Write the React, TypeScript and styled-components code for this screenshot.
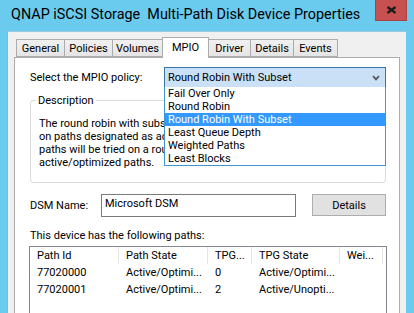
import React from 'react';
import styled, { createGlobalStyle } from 'styled-components';

const GlobalStyle = createGlobalStyle`
  html, body {
    margin: 0;
    padding: 0;
  }
  body {
    width: 414px;
    height: 313px;
    overflow: hidden;
    font-family: Roboto, "Liberation Sans", Arial, sans-serif;
    font-size: 11px;
    color: #000;
  }
`;

const Window = styled.div`
  width: 414px;
  height: 313px;
  display: flex;
  flex-direction: column;
  background: #6bcbef;
  overflow: hidden;
`;

const TitleBar = styled.div`
  height: 31px;
  display: flex;
  align-items: flex-start;
  justify-content: space-between;
  flex-shrink: 0;
`;

const Title = styled.div`
  margin: 6px 0 0 11px;
  font-size: 14.4px;
  line-height: 18px;
  color: #000;
  white-space: pre;
`;

const CloseButton = styled.div`
  width: 32px;
  height: 21px;
  margin-right: 7px;
  background: #c75050;
  border: 1px solid #a94444;
  border-top: none;
  display: flex;
  align-items: center;
  justify-content: center;
  box-sizing: border-box;
`;

const Client = styled.div`
  flex: 1;
  margin: 0 8px 0 7px;
  background: #f0f0f0;
  border-left: 1px solid #8fb3c6;
  border-top: 1px solid #9cc7dc;
  padding: 6px 0 0 6px;
  display: flex;
  flex-direction: column;
  min-height: 0;
`;

const TabStrip = styled.div`
  height: 20px;
  display: flex;
  align-items: flex-end;
  padding-left: 2px;
  margin-bottom: -1px;
  position: relative;
  z-index: 1;
`;

const Tab = styled.div<{ $w: number; $active?: boolean }>`
  width: ${({ $w }) => $w}px;
  box-sizing: border-box;
  height: ${({ $active }) => ($active ? 21 : 18)}px;
  margin-bottom: ${({ $active }) => ($active ? 0 : 1)}px;
  border: 1px solid #acacac;
  border-bottom: ${({ $active }) => ($active ? 'none' : '1px solid #acacac')};
  background: ${({ $active }) => ($active ? '#fff' : 'linear-gradient(#f0f0f0, #e5e5e5)')};
  display: flex;
  justify-content: center;
  align-items: ${({ $active }) => ($active ? 'flex-start' : 'center')};
  padding-top: ${({ $active }) => ($active ? 3 : 0)}px;
  & + & {
    margin-left: -1px;
  }
`;

const Panel = styled.div`
  width: 386px;
  flex: 1;
  box-sizing: border-box;
  background: #fff;
  border: 1px solid #acacac;
  border-bottom: none;
  padding: 9px 13px 0 15px;
  display: flex;
  flex-direction: column;
  overflow: hidden;
`;

const Row = styled.div<{ $h: number; $gap?: number }>`
  display: flex;
  align-items: center;
  height: ${({ $h }) => $h}px;
  margin-top: ${({ $gap }) => $gap ?? 0}px;
  flex-shrink: 0;
`;

const Label = styled.div<{ $w?: number }>`
  width: ${({ $w }) => ($w ? `${$w}px` : 'auto')};
  flex-shrink: 0;
  line-height: 13px;
`;

const Combo = styled.div`
  flex: 1;
  height: 21px;
  box-sizing: border-box;
  position: relative;
  background: #c9e0f7;
  border: 1px solid #3a74a5;
  display: flex;
  align-items: center;
  justify-content: space-between;
  padding: 0 5px 0 3px;
`;

const DropList = styled.div`
  position: absolute;
  top: 100%;
  left: -1px;
  right: -1px;
  background: #fff;
  border: 1px solid #3c97d3;
  border-top: none;
  z-index: 5;
`;

const DropItem = styled.div<{ $selected?: boolean }>`
  height: 13px;
  line-height: 13px;
  padding-left: 3px;
  background: ${({ $selected }) => ($selected ? '#3399ff' : 'transparent')};
  color: ${({ $selected }) => ($selected ? '#fff' : '#000')};
  white-space: nowrap;
`;

const GroupBox = styled.fieldset`
  margin: 6px 0 0;
  padding: 10px 8px 13px;
  border: 1px solid #dcdcdc;
  border-radius: 3px;
  flex-shrink: 0;
`;

const Legend = styled.legend`
  padding: 0 2px;
  margin-left: -3px;
  line-height: 13px;
`;

/* the open drop-down list hides the rest of each line */
const Description = styled.div`
  width: 125px;
  overflow: hidden;
  line-height: 13px;
  white-space: nowrap;
`;

const TextInput = styled.div`
  width: 195px;
  height: 23px;
  box-sizing: border-box;
  border: 1px solid #7a7a7a;
  display: flex;
  align-items: center;
  padding-left: 3px;
  padding-bottom: 3px;
`;

const Button = styled.div`
  margin-left: auto;
  width: 74px;
  height: 22px;
  box-sizing: border-box;
  background: #e1e1e1;
  border: 1px solid #adadad;
  display: flex;
  align-items: center;
  justify-content: center;
`;

const ListView = styled.div`
  margin: 4px -1px 0;
  flex: 1;
  border: 1px solid #828790;
  border-bottom: none;
  background: #fff;
`;

const ListRow = styled.div`
  display: grid;
  grid-template-columns: 89px 89px 44px 88px 43px;
  height: 17px;
  align-items: center;
`;

const Cell = styled.div<{ $header?: boolean }>`
  height: 100%;
  box-sizing: border-box;
  padding-left: 7px;
  display: flex;
  align-items: center;
  white-space: nowrap;
  overflow: hidden;
  border-right: ${({ $header }) => ($header ? '1px solid #e5e5e5' : 'none')};
`;

const tabs = [
  { label: 'General', w: 49 },
  { label: 'Policies', w: 49 },
  { label: 'Volumes', w: 51 },
  { label: 'MPIO', w: 47, active: true },
  { label: 'Driver', w: 43 },
  { label: 'Details', w: 44 },
  { label: 'Events', w: 45 },
];

const policies = [
  'Fail Over Only',
  'Round Robin',
  'Round Robin With Subset',
  'Least Queue Depth',
  'Weighted Paths',
  'Least Blocks',
];

const columns = ['Path Id', 'Path State', 'TPG...', 'TPG State', 'Wei...'];

const paths = [
  ['77020000', 'Active/Optimi...', '0', 'Active/Optimi...', ''],
  ['77020001', 'Active/Optimi...', '2', 'Active/Unopti...', ''],
];

const CloseIcon = () => (
  <svg width="11" height="8" viewBox="0 0 11 8">
    <path d="M1.5 1 L9.5 7 M9.5 1 L1.5 7" stroke="#1c1c1c" strokeWidth="2.2" />
  </svg>
);

const Chevron = () => (
  <svg width="8" height="6" viewBox="0 0 8 6">
    <path d="M1 1 L4 4.3 L7 1" stroke="#555" strokeWidth="1.8" fill="none" />
  </svg>
);

const App = (): JSX.Element => (
  <>
    <GlobalStyle />
    <Window>
      <TitleBar>
        <Title>QNAP iSCSI Storage  Multi-Path Disk Device Properties</Title>
        <CloseButton>
          <CloseIcon />
        </CloseButton>
      </TitleBar>

      <Client>
        <TabStrip>
          {tabs.map((t) => (
            <Tab key={t.label} $w={t.w} $active={t.active}>
              {t.label}
            </Tab>
          ))}
        </TabStrip>

        <Panel>
          <Row $h={21}>
            <Label $w={134}>Select the MPIO policy:</Label>
            <Combo>
              <span>Round Robin With Subset</span>
              <Chevron />
              <DropList>
                {policies.map((p) => (
                  <DropItem key={p} $selected={p === 'Round Robin With Subset'}>
                    {p}
                  </DropItem>
                ))}
              </DropList>
            </Combo>
          </Row>

          <GroupBox>
            <Legend>Description</Legend>
            <Description>
              The round robin with subset policy executes the round robin
              <br />
              on paths designated as active/optimized paths. The standby
              <br />
              paths will be tried on a round robin basis upon failure of all
              <br />
              active/optimized paths.
            </Description>
          </GroupBox>

          <Row $h={22} $gap={11}>
            <Label $w={71}>DSM Name:</Label>
            <TextInput>Microsoft DSM</TextInput>
            <Button>Details</Button>
          </Row>

          <Row $h={13} $gap={13}>
            <Label>This device has the following paths:</Label>
          </Row>

          <ListView>
            <ListRow>
              {columns.map((c) => (
                <Cell key={c} $header>
                  {c}
                </Cell>
              ))}
            </ListRow>
            {paths.map((r) => (
              <ListRow key={r[0]}>
                {r.map((v, i) => (
                  <Cell key={i}>{v}</Cell>
                ))}
              </ListRow>
            ))}
          </ListView>
        </Panel>
      </Client>
    </Window>
  </>
);

export default App;
